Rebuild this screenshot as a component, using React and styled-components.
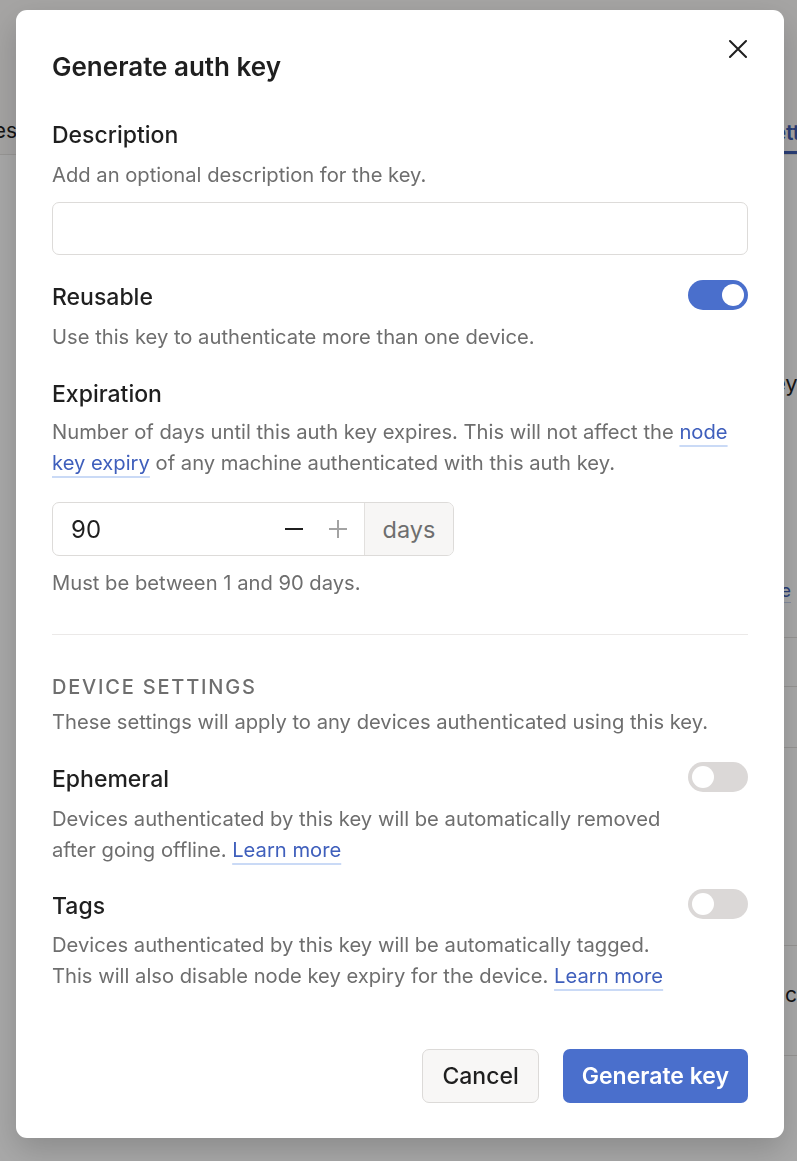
import React, { useState } from 'react'
import styled, { createGlobalStyle } from 'styled-components'

const GlobalStyle = createGlobalStyle`
    html, body {
        margin: 0;
        padding: 0;
        overflow: hidden;
    }
    body {
        font-family: Inter, "Noto Sans", "Liberation Sans", sans-serif;
        background: #ffffff;
        color: #1f1f1f;
    }
    * {
        box-sizing: border-box;
    }
`

function Toggle({ on, onChange }) {
    return (
        <Track $on={on} onClick={() => onChange(!on)}>
            <Knob $on={on} />
        </Track>
    )
}

function CloseIcon() {
    return (
        <svg width="20" height="20" viewBox="0 0 20 20" fill="none">
            <path d="M2 2L18 18M18 2L2 18" stroke="#1f1f1f" strokeWidth="2" strokeLinecap="round" />
        </svg>
    )
}

function MinusIcon() {
    return (
        <svg width="20" height="20" viewBox="0 0 20 20" fill="none">
            <path d="M1 10H19" stroke="#1f1f1f" strokeWidth="2" />
        </svg>
    )
}

function PlusIcon() {
    return (
        <svg width="20" height="20" viewBox="0 0 20 20" fill="none">
            <path d="M1 10H19M10 1V19" stroke="#a3a3a3" strokeWidth="2" />
        </svg>
    )
}

function App() {
    const [reusable, setReusable] = useState(true)
    const [ephemeral, setEphemeral] = useState(false)
    const [tags, setTags] = useState(false)

    return (
        <>
            <GlobalStyle />
            <Page>
                <TabBar>
                    <Tab>Services</Tab>
                    <Tab $active>Settings</Tab>
                </TabBar>
                <PageBody>
                    <PageHeading>Key</PageHeading>
                    <PageLink>Learn more</PageLink>
                    <TableRow $h={37} />
                    <TableRow $h={49} />
                    <TableRow $h={61} />
                    <TableRow $h={198} />
                    <TableRow $h={110}>
                        <CellText>configure</CellText>
                    </TableRow>
                </PageBody>
            </Page>

            <Overlay>
                <Modal>
                    <Header>
                        <Title>Generate auth key</Title>
                        <CloseButton aria-label="Close">
                            <CloseIcon />
                        </CloseButton>
                    </Header>

                    <Section>
                        <Label>Description</Label>
                        <Hint>Add an optional description for the key.</Hint>
                        <TextInput type="text" />
                    </Section>

                    <ToggleRow $gap={28}>
                        <ToggleText>
                            <Label>Reusable</Label>
                            <Hint>Use this key to authenticate more than one device.</Hint>
                        </ToggleText>
                        <Toggle on={reusable} onChange={setReusable} />
                    </ToggleRow>

                    <Section $gap={28}>
                        <Label>Expiration</Label>
                        <Hint $gap={8}>
                            Number of days until this auth key expires. This will not affect the{' '}
                            <Link href="#">node key expiry</Link> of any machine authenticated with this auth key.
                        </Hint>
                        <NumberField>
                            <NumberValue>90</NumberValue>
                            <Stepper>
                                <MinusIcon />
                                <PlusIcon />
                            </Stepper>
                            <Addon>days</Addon>
                        </NumberField>
                        <Note>Must be between 1 and 90 days.</Note>
                    </Section>

                    <Divider />

                    <Section>
                        <Eyebrow>Device settings</Eyebrow>
                        <Hint $gap={5}>These settings will apply to any devices authenticated using this key.</Hint>
                    </Section>

                    <ToggleRow $gap={28}>
                        <ToggleText>
                            <Label>Ephemeral</Label>
                            <Hint>
                                Devices authenticated by this key will be automatically removed after going offline.{' '}
                                <Link href="#">Learn more</Link>
                            </Hint>
                        </ToggleText>
                        <Toggle on={ephemeral} onChange={setEphemeral} />
                    </ToggleRow>

                    <ToggleRow $gap={27}>
                        <ToggleText>
                            <Label>Tags</Label>
                            <Hint $gap={9}>
                                Devices authenticated by this key will be automatically tagged.
                                This will also disable node key expiry for the device.{' '}
                                <Link href="#">Learn more</Link>
                            </Hint>
                        </ToggleText>
                        <Toggle on={tags} onChange={setTags} />
                    </ToggleRow>

                    <Footer>
                        <SecondaryButton>Cancel</SecondaryButton>
                        <PrimaryButton>Generate key</PrimaryButton>
                    </Footer>
                </Modal>
            </Overlay>
        </>
    )
}

export default App

const Page = styled.div`
    width: 100vw;
    height: 100vh;
    overflow: hidden;
`

const TabBar = styled.div`
    height: 155px;
    background: #faf9f8;
    border-bottom: 1px solid #e6e4e2;
    display: flex;
    align-items: flex-end;
    justify-content: space-between;
    margin-left: -69px;
    margin-right: -80px;
`

const Tab = styled.div`
    font-size: 21px;
    font-weight: ${p => (p.$active ? 600 : 400)};
    color: ${p => (p.$active ? '#3e5db3' : '#1f1f1f')};
    padding-top: ${p => (p.$active ? '3px' : '0')};
    border-bottom: ${p => (p.$active ? '3px solid #3e5db3' : '3px solid transparent')};
    height: 44px;
    display: flex;
    align-items: center;
    width: ${p => (p.$active ? '117px' : 'auto')};
`

const PageBody = styled.div`
    padding-left: 762px;
    white-space: nowrap;
`

const PageHeading = styled.div`
    font-size: 22px;
    margin-top: 215px;
    margin-left: -3px;
    height: 30px;
    color: #1f1f1f;
`

const PageLink = styled.div`
    margin-left: -762px;
    width: 791px;
    text-align: right;
    font-size: 18px;
    color: #3e5db3;
    margin-top: 180px;
    text-decoration: underline;
    text-decoration-color: #c9d6f2;
    text-underline-offset: 5px;
`

const TableRow = styled.div`
    height: ${p => p.$h}px;
    border-bottom: 1px solid #e4e2e0;
    margin-left: -20px;
    display: flex;
    align-items: center;
`

const CellText = styled.div`
    font-size: 21px;
    color: #1f1f1f;
    margin-left: 43px;
    margin-top: -12px;
`

const Overlay = styled.div`
    position: fixed;
    inset: 0;
    background: rgba(0, 0, 0, 0.34);
    display: flex;
    justify-content: flex-start;
    align-items: flex-start;
    padding: 10px 0 0 16px;
`

const Modal = styled.div`
    width: 768px;
    height: 1128px;
    background: #ffffff;
    border-radius: 11px;
    box-shadow: 0 12px 32px rgba(0, 0, 0, 0.18);
    padding: 41px 36px 35px;
    display: flex;
    flex-direction: column;
`

const Header = styled.div`
    display: flex;
    justify-content: space-between;
    align-items: flex-start;
`

const Title = styled.h2`
    margin: 0;
    font-size: 26px;
    line-height: 32px;
    font-weight: 600;
    color: #1f1f1f;
`

const CloseButton = styled.button`
    border: none;
    background: none;
    padding: 0;
    margin-top: -12px;
    width: 20px;
    height: 20px;
    display: flex;
    cursor: pointer;
`

const Section = styled.div`
    display: flex;
    flex-direction: column;
    margin-top: ${p => p.$gap ?? 38}px;
`

const ToggleRow = styled.div`
    display: flex;
    justify-content: space-between;
    align-items: flex-start;
    gap: 20px;
    margin-top: ${p => p.$gap}px;
`

const ToggleText = styled.div`
    display: flex;
    flex-direction: column;
    flex: 1;
`

const Label = styled.div`
    font-size: 23px;
    line-height: 28px;
    font-weight: 500;
    color: #1f1f1f;
`

const Hint = styled.p`
    margin: ${p => p.$gap ?? 10}px 0 0;
    font-size: 20.2px;
    line-height: 31px;
    color: #6e6e6e;
`

const Link = styled.a`
    color: #3f5fbc;
    text-decoration: underline;
    text-decoration-color: #cadaf6;
    text-decoration-thickness: 2px;
    text-underline-offset: 6px;
`

const TextInput = styled.input`
    margin-top: 12px;
    height: 53px;
    width: 100%;
    border: 1px solid #dddbd9;
    border-radius: 7px;
    font: inherit;
    font-size: 22px;
    padding: 0 18px;
    outline: none;
`

const Track = styled.div`
    width: 60px;
    height: 30px;
    flex-shrink: 0;
    border-radius: 15px;
    background: ${p => (p.$on ? '#4a6fcc' : '#dbd8d7')};
    display: flex;
    align-items: center;
    justify-content: ${p => (p.$on ? 'flex-end' : 'flex-start')};
    padding: 0 4px;
    margin-top: -3px;
    cursor: pointer;
`

const Knob = styled.div`
    width: 22px;
    height: 22px;
    border-radius: 50%;
    background: #ffffff;
`

const NumberField = styled.div`
    margin-top: 24px;
    width: 402px;
    height: 54px;
    border: 1px solid #dddbd9;
    border-radius: 7px;
    display: flex;
    align-items: stretch;
    overflow: hidden;
`

const NumberValue = styled.div`
    flex: 1;
    display: flex;
    align-items: center;
    padding-left: 18px;
    font-size: 24px;
    color: #1f1f1f;
`

const Stepper = styled.div`
    display: flex;
    align-items: center;
    gap: 24px;
    padding-right: 16px;
`

const Addon = styled.div`
    width: 89px;
    background: #f7f6f5;
    border-left: 1px solid #e2e0de;
    display: flex;
    align-items: center;
    justify-content: center;
    font-size: 23.5px;
    color: #6e6e6e;
`

const Note = styled.div`
    margin-top: 11px;
    font-size: 20.2px;
    line-height: 31px;
    color: #6e6e6e;
`

const Divider = styled.hr`
    margin: 36px 0 0;
    border: none;
    border-top: 1px solid #ebe9e8;
`

const Eyebrow = styled.div`
    font-size: 20px;
    line-height: 28px;
    font-weight: 500;
    letter-spacing: 1.8px;
    text-transform: uppercase;
    color: #6e6e6e;
`

const Footer = styled.div`
    margin-top: auto;
    display: flex;
    justify-content: flex-end;
    gap: 24px;
`

const SecondaryButton = styled.button`
    height: 54px;
    padding: 0 19px;
    border-radius: 7px;
    border: 1px solid #dcdad8;
    background: #f8f7f6;
    font: inherit;
    font-size: 23px;
    font-weight: 500;
    color: #1f1f1f;
    cursor: pointer;
`

const PrimaryButton = styled.button`
    height: 54px;
    padding: 0 19px;
    border-radius: 7px;
    border: none;
    background: #4a6fcc;
    font: inherit;
    font-size: 23px;
    font-weight: 600;
    color: #ffffff;
    cursor: pointer;
`
